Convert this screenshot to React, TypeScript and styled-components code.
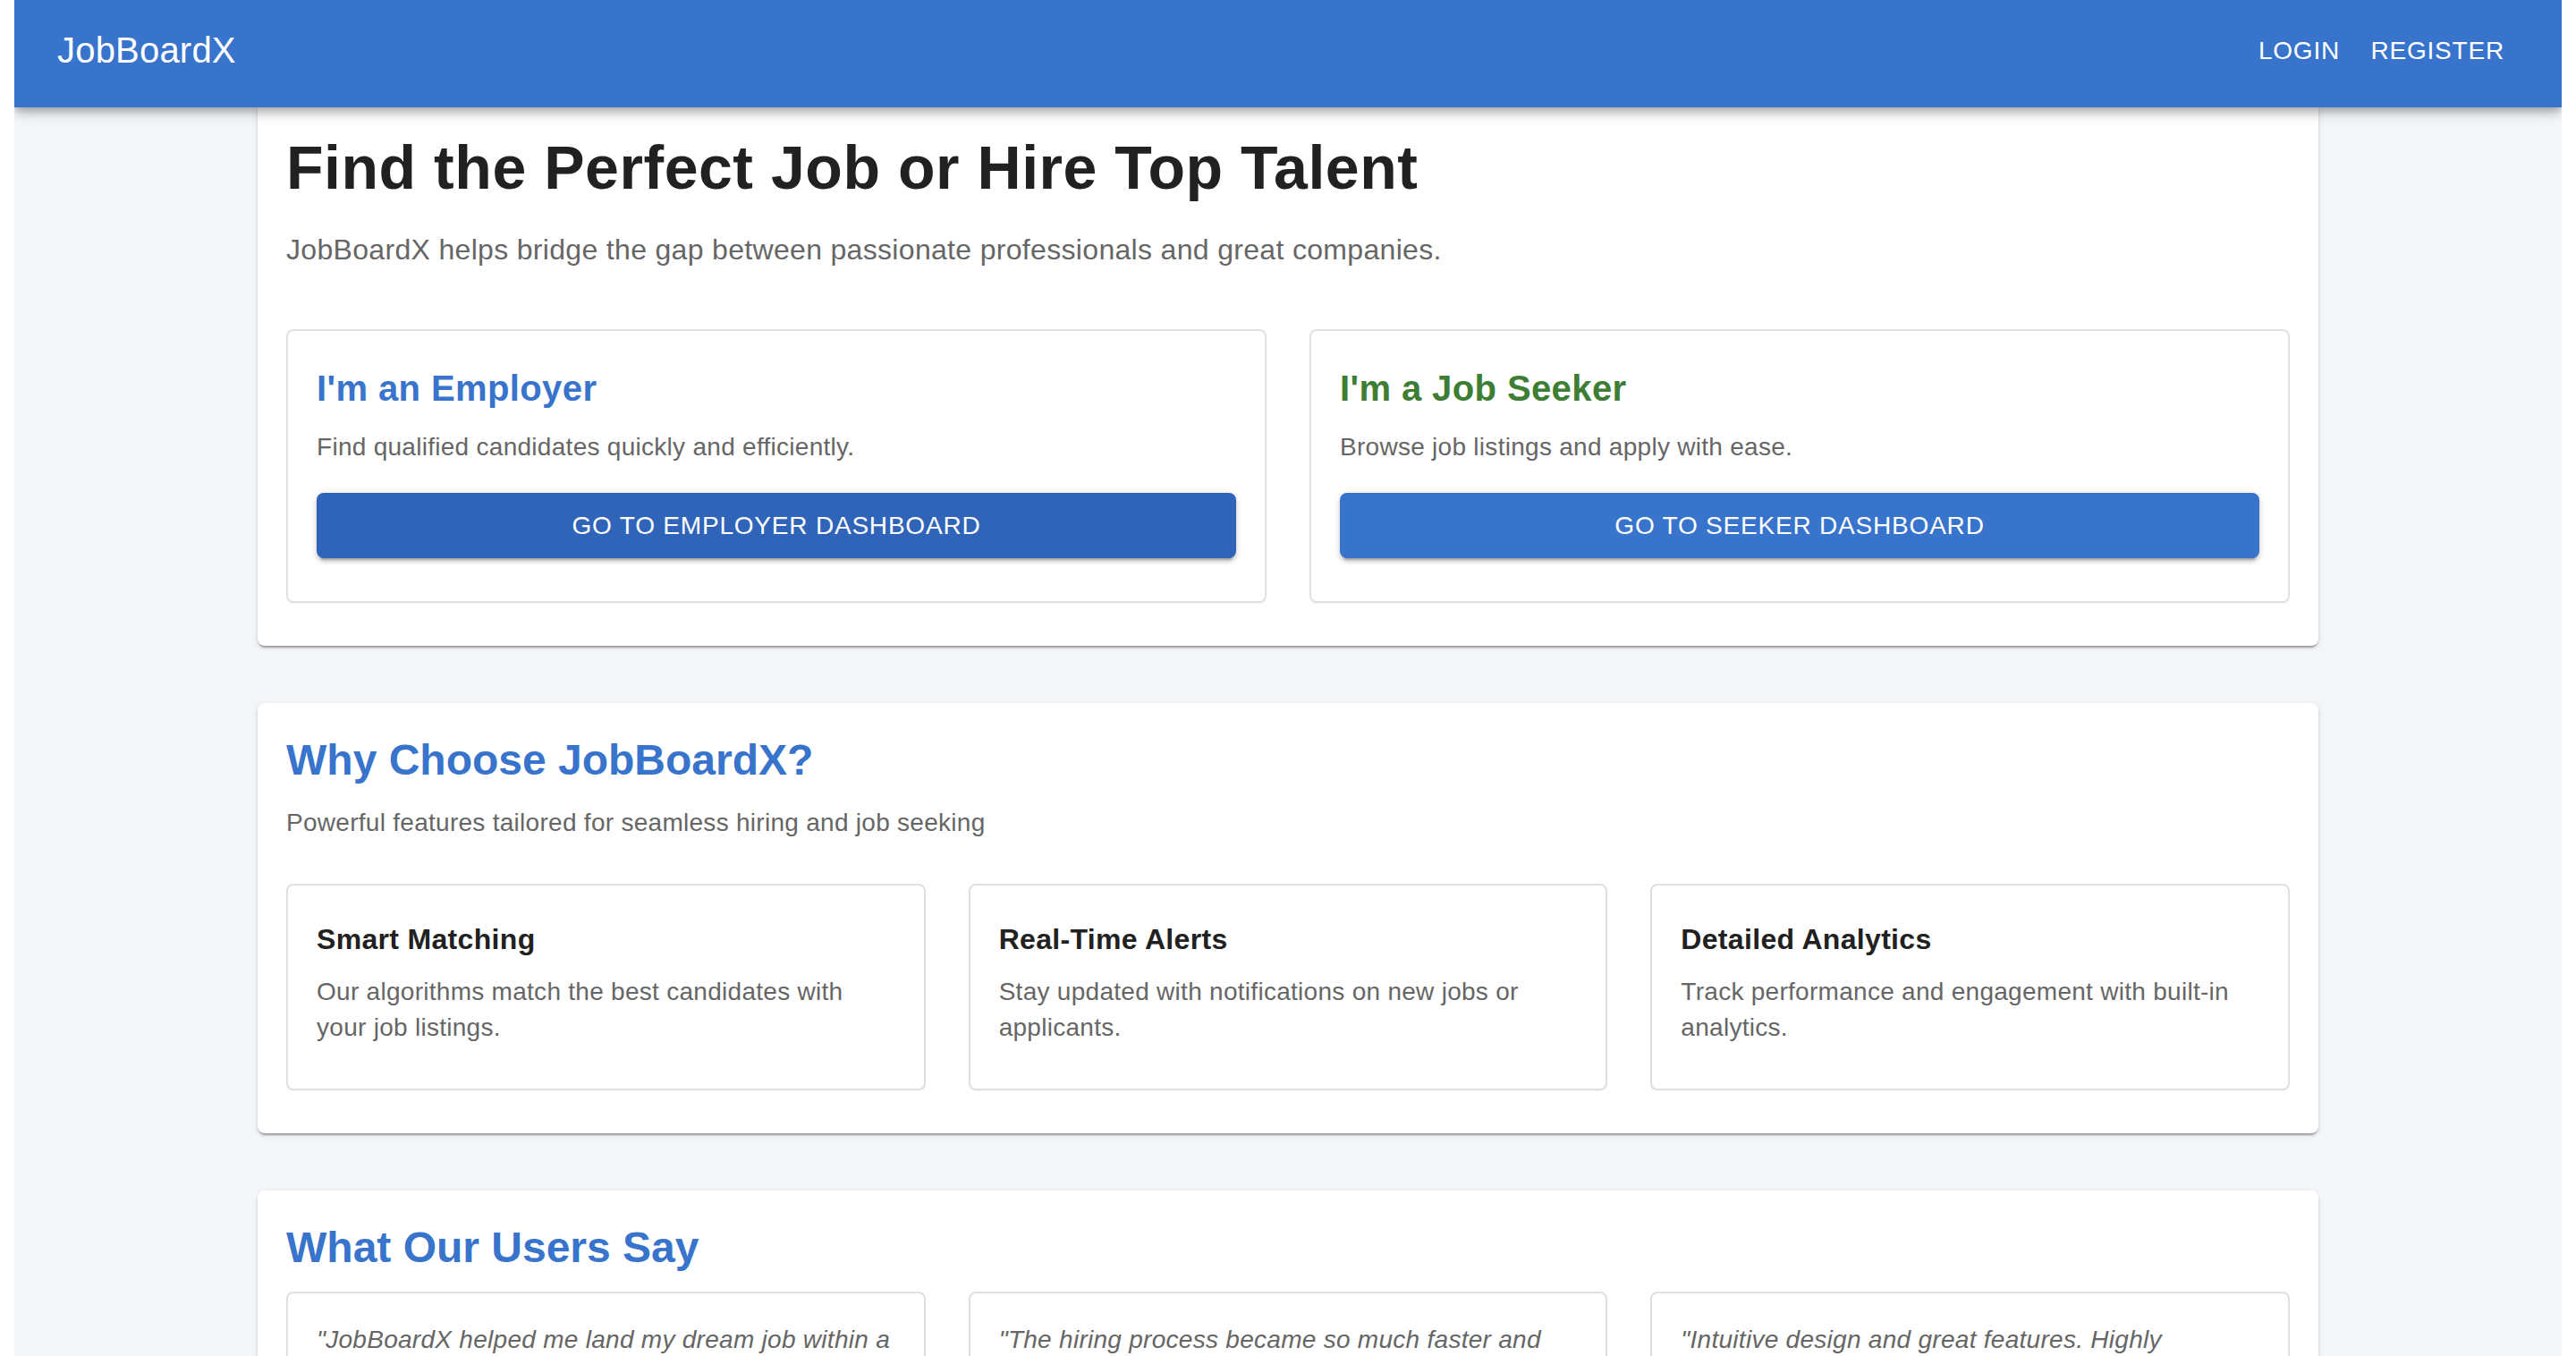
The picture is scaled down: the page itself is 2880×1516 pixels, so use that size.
import React from "react";
import styled, { createGlobalStyle } from "styled-components";

const GlobalStyle = createGlobalStyle`
  html, body { background: #ffffff; }
  html { scrollbar-width: none; }
  html::-webkit-scrollbar { display: none; }
  * { box-sizing: border-box; }
  body {
    margin: 0 16px;
    font-family: "Liberation Sans", Arial, Helvetica, sans-serif;
    color: #212121;
  }
`;

const PRIMARY = "#3874cb";
const PRIMARY_DARK = "#3064b9";
const GREEN = "#3d7d34";

const Root = styled.div`
  min-height: 100vh;
  background: #f4f6fa;
  padding-bottom: 64px;
`;

const AppBar = styled.header`
  position: relative;
  z-index: 2;
  height: 120px;
  padding: 0 48px 8px;
  display: flex;
  align-items: center;
  justify-content: space-between;
  background: ${PRIMARY};
  color: #ffffff;
  box-shadow: 0 4px 8px -2px rgba(0, 0, 0, 0.2), 0 8px 10px 0 rgba(0, 0, 0, 0.14),
    0 2px 20px 0 rgba(0, 0, 0, 0.12);
`;

const Brand = styled.div`
  font-size: 40px;
  line-height: 64px;
  font-weight: 400;
  letter-spacing: 0.005em;
`;

const Nav = styled.nav`
  display: flex;
  align-items: center;
`;

const NavButton = styled.button`
  min-width: 128px;
  padding: 12px 16px;
  border: 0;
  border-radius: 8px;
  background: transparent;
  color: #ffffff;
  font-family: inherit;
  font-size: 28px;
  line-height: 49px;
  font-weight: 500;
  letter-spacing: 0.02857em;
  text-transform: uppercase;
  cursor: pointer;
`;

const Main = styled.main`
  max-width: 2304px;
  margin: 0 auto;
  display: flex;
  flex-direction: column;
  gap: 64px;
`;

const Panel = styled.section<{ $flushTop?: boolean }>`
  background: #ffffff;
  border-radius: ${(p) => (p.$flushTop ? "0 0 8px 8px" : "8px")};
  padding: ${(p) => (p.$flushTop ? "25px" : "32px")} 32px 48px;
  box-shadow: 0 4px 2px -2px rgba(0, 0, 0, 0.2), 0 2px 2px 0 rgba(0, 0, 0, 0.14),
    0 2px 6px 0 rgba(0, 0, 0, 0.12);
`;

const HeroTitle = styled.h1`
  margin: 0 0 26px;
  font-size: 68px;
  line-height: 84px;
  font-weight: 700;
  letter-spacing: 0.008em;
  color: #212121;
`;

const Lead = styled.p`
  margin: 0 0 65px;
  font-size: 32px;
  line-height: 48px;
  color: #666666;
  letter-spacing: 0.01em;
`;

const Grid = styled.div<{ $cols: number }>`
  display: grid;
  grid-template-columns: repeat(${(p) => p.$cols}, minmax(0, 1fr));
  gap: 48px;
`;

const OutlinedCard = styled.div`
  background: #ffffff;
  border: 2px solid #e0e0e0;
  border-radius: 8px;
  padding: 32px 32px 48px;
  box-shadow: 0 1px 2px rgba(0, 0, 0, 0.05);
`;

const RoleTitle = styled.h3<{ $color: string }>`
  margin: 0 0 14px;
  font-size: 40px;
  line-height: 64px;
  font-weight: 700;
  letter-spacing: 0.01em;
  color: ${(p) => p.$color};
`;

const BodyText = styled.p<{ $mb?: number; $italic?: boolean }>`
  margin: 0 0 ${(p) => p.$mb ?? 0}px;
  font-size: 28px;
  line-height: 40px;
  color: #666666;
  letter-spacing: 0.01em;
  font-style: ${(p) => (p.$italic ? "italic" : "normal")};
`;

const ActionButton = styled.button<{ $bg: string }>`
  display: flex;
  align-items: center;
  justify-content: center;
  width: 100%;
  height: 73px;
  border: 0;
  border-radius: 8px;
  background: ${(p) => p.$bg};
  color: #ffffff;
  font-family: inherit;
  font-size: 28px;
  font-weight: 500;
  letter-spacing: 0.02857em;
  text-transform: uppercase;
  cursor: pointer;
  box-shadow: 0 6px 2px -4px rgba(0, 0, 0, 0.2), 0 4px 4px 0 rgba(0, 0, 0, 0.14),
    0 2px 10px 0 rgba(0, 0, 0, 0.12);
`;

const SectionTitle = styled.h2<{ $mb: number }>`
  margin: 0 0 ${(p) => p.$mb}px;
  font-size: 48px;
  line-height: 64px;
  font-weight: 700;
  color: ${PRIMARY};
`;

const SectionLead = styled.p`
  margin: 0 0 48px;
  font-size: 28px;
  line-height: 40px;
  color: #666666;
  letter-spacing: 0.01em;
`;

const FeatureTitle = styled.h4`
  margin: 0 0 11px;
  font-size: 32px;
  line-height: 56px;
  font-weight: 700;
  letter-spacing: 0.01em;
  color: #212121;
`;

const Author = styled.p`
  margin: 24px 0 0;
  font-size: 28px;
  line-height: 40px;
  font-weight: 700;
  color: #212121;
`;

const features = [
  {
    title: "Smart Matching",
    text: "Our algorithms match the best candidates with your job listings.",
  },
  {
    title: "Real-Time Alerts",
    text: "Stay updated with notifications on new jobs or applicants.",
  },
  {
    title: "Detailed Analytics",
    text: "Track performance and engagement with built-in analytics.",
  },
];

const testimonials = [
  {
    quote: '"JobBoardX helped me land my dream job within a week!"',
    author: "- Sarah, Software Engineer",
  },
  {
    quote: '"The hiring process became so much faster and more efficient."',
    author: "- Mark, HR Manager",
  },
  {
    quote: '"Intuitive design and great features. Highly recommended!"',
    author: "- Priya, Product Designer",
  },
];

export default function App() {
  return (
    <>
      <GlobalStyle />
      <Root>
        <AppBar>
          <Brand>JobBoardX</Brand>
          <Nav>
            <NavButton>LOGIN</NavButton>
            <NavButton>REGISTER</NavButton>
          </Nav>
        </AppBar>

        <Main>
          <Panel $flushTop>
            <HeroTitle>Find the Perfect Job or Hire Top Talent</HeroTitle>
            <Lead>
              JobBoardX helps bridge the gap between passionate professionals and great companies.
            </Lead>
            <Grid $cols={2}>
              <OutlinedCard>
                <RoleTitle $color={PRIMARY}>I'm an Employer</RoleTitle>
                <BodyText $mb={31}>Find qualified candidates quickly and efficiently.</BodyText>
                <ActionButton $bg={PRIMARY_DARK}>GO TO EMPLOYER DASHBOARD</ActionButton>
              </OutlinedCard>
              <OutlinedCard>
                <RoleTitle $color={GREEN}>I'm a Job Seeker</RoleTitle>
                <BodyText $mb={31}>Browse job listings and apply with ease.</BodyText>
                <ActionButton $bg={PRIMARY}>GO TO SEEKER DASHBOARD</ActionButton>
              </OutlinedCard>
            </Grid>
          </Panel>

          <Panel>
            <SectionTitle $mb={18}>Why Choose JobBoardX?</SectionTitle>
            <SectionLead>Powerful features tailored for seamless hiring and job seeking</SectionLead>
            <Grid $cols={3}>
              {features.map((f) => (
                <OutlinedCard key={f.title}>
                  <FeatureTitle>{f.title}</FeatureTitle>
                  <BodyText>{f.text}</BodyText>
                </OutlinedCard>
              ))}
            </Grid>
          </Panel>

          <Panel>
            <SectionTitle $mb={17}>What Our Users Say</SectionTitle>
            <Grid $cols={3}>
              {testimonials.map((t) => (
                <OutlinedCard key={t.author}>
                  <BodyText $italic>{t.quote}</BodyText>
                  <Author>{t.author}</Author>
                </OutlinedCard>
              ))}
            </Grid>
          </Panel>
        </Main>
      </Root>
    </>
  );
}
